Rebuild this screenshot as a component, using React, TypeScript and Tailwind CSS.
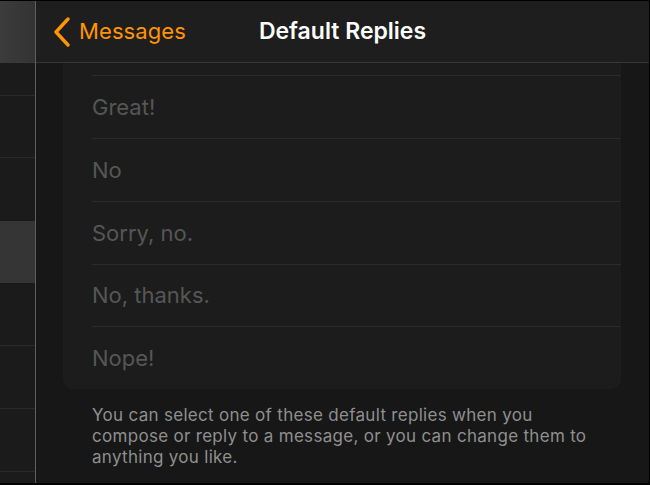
import React from "react";

const replies = ["Great!", "No", "Sorry, no.", "No, thanks.", "Nope!"];

export default function App() {
  return (
    <div
      className="w-[650px] h-[485px] bg-black pt-[1px] pr-[1px] pb-[2px] overflow-hidden"
      style={{ fontFamily: "Inter, 'Noto Sans', sans-serif" }}
    >
      <div className="flex h-full w-full">
        {/* Left column */}
        <div className="w-[35px] flex flex-col bg-[#1b1b1b] overflow-hidden">
          <div className="h-[62px] shrink-0 bg-gradient-to-r from-[#3c3c3c] to-[#333333] border-b border-[#3a3a3a]" />
          <div className="h-[33px] shrink-0 border-b border-[#2a2a2a]" />
          <div className="h-[62px] shrink-0 border-b border-[#2a2a2a]" />
          <div className="h-[63px] shrink-0" />
          <div className="h-[62px] shrink-0 bg-[#353535]" />
          <div className="h-[63px] shrink-0 border-b border-[#2a2a2a]" />
          <div className="h-[63px] shrink-0 border-b border-[#2a2a2a]" />
          <div className="h-[63px] shrink-0 border-b border-[#2a2a2a]" />
          <div className="h-[20px] shrink-0" />
        </div>
        <div className="w-[1px] bg-[#5e5e5e]" />
        {/* Main */}
        <div className="flex-1 flex flex-col bg-[#171717] overflow-hidden">
          <div className="h-[62px] shrink-0 bg-[#1e1e1e] border-b border-[#363636] relative flex items-center">
            <div className="flex items-center pl-[16px] gap-[9px] text-[#ff9500] text-[22px]">
              <svg width="19" height="30" viewBox="0 0 19 30" className="mt-[1px]">
                <polyline
                  points="16,2 4,15 16,28"
                  fill="none"
                  stroke="#ff9500"
                  strokeWidth="3.4"
                  strokeLinecap="round"
                  strokeLinejoin="round"
                />
              </svg>
              <span className="tracking-[0.1px] -ml-[1px]">Messages</span>
            </div>
            <div className="absolute inset-0 flex items-center justify-center pointer-events-none">
              <span className="text-white text-[23px] font-semibold">Default Replies</span>
            </div>
          </div>
          <div className="flex-1 pl-[27px] pr-[28px]">
            <div className="bg-[#1c1c1c] rounded-b-[10px] pl-[29px]">
              <div className="h-[13px] border-b border-[#2b2b2b]" />
              {replies.map((r, i) => (
                <div
                  key={r}
                  className={`${i === 3 || i === 4 ? "h-[62px]" : "h-[63px]"} flex items-center text-[22px] text-[#565656] ${
                    i < replies.length - 1 ? "border-b border-[#2b2b2b]" : ""
                  }`}
                >
                  {r}
                </div>
              ))}
            </div>
            <p className="pl-[29px] pr-[24px] pt-[16px] text-[17px] leading-[21px] text-[#8f8f8f] tracking-[0.3px]">
              You can select one of these default replies when you compose or reply to a message, or you can
              change them to anything you like.
            </p>
          </div>
        </div>
      </div>
    </div>
  );
}
